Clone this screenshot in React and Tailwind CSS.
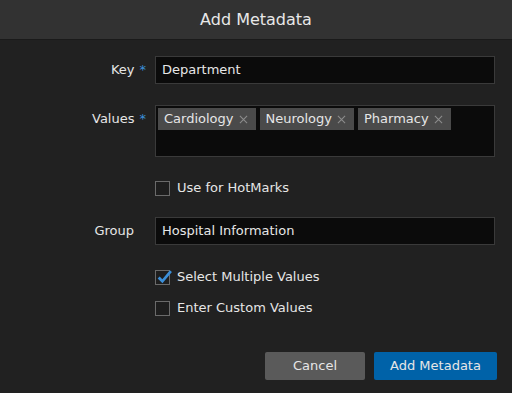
import { useState } from 'react';

function Tag({ label }) {
  return (
    <span className="flex items-center h-[22px] bg-[#4a4a4a] pl-[6px] pr-[8px] text-[#e6e6e6]">
      {label}
      <svg viewBox="0 0 10 10" className="ml-[5px] w-[9px] h-[9px]">
        <path d="M1 1 L9 9 M9 1 L1 9" stroke="#8c8c8c" strokeWidth="1.2" />
      </svg>
    </span>
  );
}

function Checkbox({ checked, label, onChange }) {
  return (
    <label className="flex items-center gap-[7px] cursor-pointer">
      <span
        onClick={onChange}
        className="relative w-[15px] h-[15px] border border-[#6a6a6a] bg-[#1e1e1e]"
      >
        {checked && (
          <svg viewBox="0 0 16 16" className="absolute left-[0px] top-[-3px] w-[17px] h-[17px]">
            <path d="M2.5 9 L6 12.5 L14 3" fill="none" stroke="#3b8fd9" strokeWidth="2.6" />
          </svg>
        )}
      </span>
      <span className="text-[#e6e6e6]">{label}</span>
    </label>
  );
}

export default function App() {
  const [hotmarks, setHotmarks] = useState(false);
  const [multiple, setMultiple] = useState(true);
  const [custom, setCustom] = useState(false);

  return (
    <div
      className="w-[512px] h-[393px] bg-[#212121] text-[13px] text-[#e6e6e6] flex flex-col"
      style={{ fontFamily: '"DejaVu Sans", "Noto Sans", sans-serif' }}
    >
      <div className="h-[40px] bg-[#323232] border-b border-[#1a1a1a] flex items-center justify-center">
        <h1 className="text-[16px] text-[#e8e8e8]">Add Metadata</h1>
      </div>

      <div className="flex flex-col pr-[17px] pt-[16px]">
        <div className="flex items-center h-[28px]">
          <div className="w-[155px] pr-[9px] flex justify-end items-center gap-[5px]">
            <span>Key</span>
            <span className="text-[#3b8fd9]">*</span>
          </div>
          <div className="flex-1 h-[28px] bg-[#0b0b0b] border border-[#3a3a3a] flex items-center px-[6px]">
            Department
          </div>
        </div>

        <div className="flex mt-[21px]">
          <div className="w-[155px] pr-[9px] flex justify-end items-center gap-[5px] h-[28px]">
            <span>Values</span>
            <span className="text-[#3b8fd9]">*</span>
          </div>
          <div className="flex-1 h-[52px] bg-[#0b0b0b] border border-[#3a3a3a] pl-[2px] pt-[2px] flex items-start gap-[4px]">
            <Tag label="Cardiology" />
            <Tag label="Neurology" />
            <Tag label="Pharmacy" />
          </div>
        </div>

        <div className="pl-[155px] mt-[23px] h-[16px] flex items-center">
          <Checkbox checked={hotmarks} label="Use for HotMarks" onChange={() => setHotmarks(!hotmarks)} />
        </div>

        <div className="flex items-center h-[28px] mt-[21px]">
          <div className="w-[155px] pr-[21px] flex justify-end">
            <span>Group</span>
          </div>
          <div className="flex-1 h-[28px] bg-[#0b0b0b] border border-[#3a3a3a] flex items-center px-[6px]">
            Hospital Information
          </div>
        </div>

        <div className="pl-[155px] mt-[24px] h-[16px] flex items-center">
          <Checkbox checked={multiple} label="Select Multiple Values" onChange={() => setMultiple(!multiple)} />
        </div>
        <div className="pl-[155px] mt-[15px] h-[16px] flex items-center">
          <Checkbox checked={custom} label="Enter Custom Values" onChange={() => setCustom(!custom)} />
        </div>

        <div className="flex justify-end gap-[9px] mt-[36px] mr-[-2px]">
          <button className="w-[100px] h-[28px] bg-[#5a5a5a] rounded-[2px] text-[#e6e6e6]">Cancel</button>
          <button className="w-[123px] h-[28px] bg-[#0062a8] rounded-[2px] text-[#e6e6e6]">Add Metadata</button>
        </div>
      </div>
    </div>
  );
}
